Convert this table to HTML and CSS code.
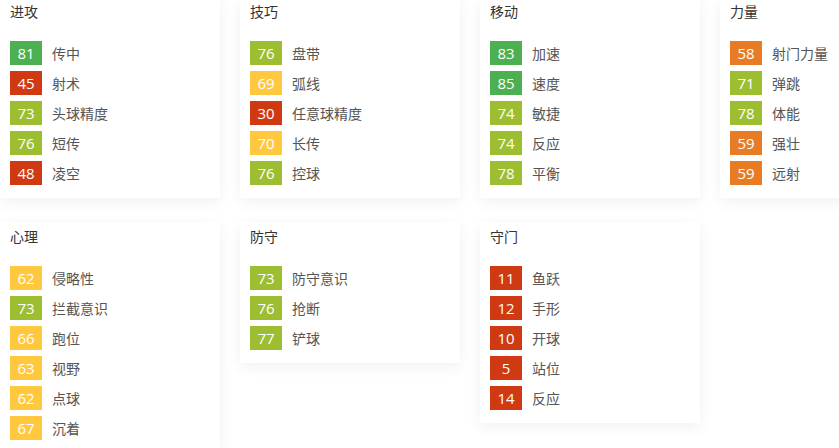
FILE: index.html
```html
<!DOCTYPE html>
<html lang="zh-CN">
<head>
  <meta charset="UTF-8" />
  <title>球员能力</title>
  <link rel="stylesheet" href="styles.css">
</head>
<body>
  <div class="groups">
    <div class="card">
      <h3>进攻</h3>
      <div class="attr"><span class="val lv-a">81</span>传中</div>
      <div class="attr"><span class="val lv-e">45</span>射术</div>
      <div class="attr"><span class="val lv-b">73</span>头球精度</div>
      <div class="attr"><span class="val lv-b">76</span>短传</div>
      <div class="attr"><span class="val lv-e">48</span>凌空</div>
    </div>
    <div class="card">
      <h3>技巧</h3>
      <div class="attr"><span class="val lv-b">76</span>盘带</div>
      <div class="attr"><span class="val lv-c">69</span>弧线</div>
      <div class="attr"><span class="val lv-e">30</span>任意球精度</div>
      <div class="attr"><span class="val lv-c">70</span>长传</div>
      <div class="attr"><span class="val lv-b">76</span>控球</div>
    </div>
    <div class="card">
      <h3>移动</h3>
      <div class="attr"><span class="val lv-a">83</span>加速</div>
      <div class="attr"><span class="val lv-a">85</span>速度</div>
      <div class="attr"><span class="val lv-b">74</span>敏捷</div>
      <div class="attr"><span class="val lv-b">74</span>反应</div>
      <div class="attr"><span class="val lv-b">78</span>平衡</div>
    </div>
    <div class="card">
      <h3>力量</h3>
      <div class="attr"><span class="val lv-d">58</span>射门力量</div>
      <div class="attr"><span class="val lv-b">71</span>弹跳</div>
      <div class="attr"><span class="val lv-b">78</span>体能</div>
      <div class="attr"><span class="val lv-d">59</span>强壮</div>
      <div class="attr"><span class="val lv-d">59</span>远射</div>
    </div>
    <div class="card">
      <h3>心理</h3>
      <div class="attr"><span class="val lv-c">62</span>侵略性</div>
      <div class="attr"><span class="val lv-b">73</span>拦截意识</div>
      <div class="attr"><span class="val lv-c">66</span>跑位</div>
      <div class="attr"><span class="val lv-c">63</span>视野</div>
      <div class="attr"><span class="val lv-c">62</span>点球</div>
      <div class="attr"><span class="val lv-c">67</span>沉着</div>
    </div>
    <div class="card">
      <h3>防守</h3>
      <div class="attr"><span class="val lv-b">73</span>防守意识</div>
      <div class="attr"><span class="val lv-b">76</span>抢断</div>
      <div class="attr"><span class="val lv-b">77</span>铲球</div>
    </div>
    <div class="card">
      <h3>守门</h3>
      <div class="attr"><span class="val lv-e">11</span>鱼跃</div>
      <div class="attr"><span class="val lv-e">12</span>手形</div>
      <div class="attr"><span class="val lv-e">10</span>开球</div>
      <div class="attr"><span class="val lv-e">5</span>站位</div>
      <div class="attr"><span class="val lv-e">14</span>反应</div>
    </div>
  </div>
</body>
</html>
```

FILE: styles.css
```css
body {
  margin: 0;
  background: #fff;
  font-family: "Open Sans", "Noto Sans CJK SC", sans-serif;
  overflow: hidden;
}

.groups {
  width: 960px;
  margin-top: -3px;
  display: flex;
  flex-wrap: wrap;
  align-items: flex-start;
  gap: 24px 20px;
}

.card {
  width: 220px;
  box-sizing: border-box;
  padding: 4px 10px 7px;
  background: #fff;
  box-shadow: 0 4px 14px rgba(0, 0, 0, 0.06);
}

.card h3 {
  margin: 0 0 20px;
  font-size: 14px;
  font-weight: normal;
  line-height: 20px;
  color: #333;
  font-family: "Noto Sans CJK SC", sans-serif;
}

.attr {
  display: flex;
  align-items: center;
  height: 24px;
  margin-bottom: 6px;
  font-size: 14px;
  color: #555;
  font-family: "Noto Sans CJK SC", sans-serif;
}

.val {
  width: 32px;
  height: 24px;
  line-height: 24px;
  margin-right: 10px;
  text-align: center;
  color: #fff;
  font-size: 15px;
  font-family: "Open Sans", sans-serif;
}

.lv-a { background: #4caf50; }
.lv-b { background: #9cbe30; }
.lv-c { background: #ffc83e; }
.lv-d { background: #e87c25; }
.lv-e { background: #d03a13; }
```
